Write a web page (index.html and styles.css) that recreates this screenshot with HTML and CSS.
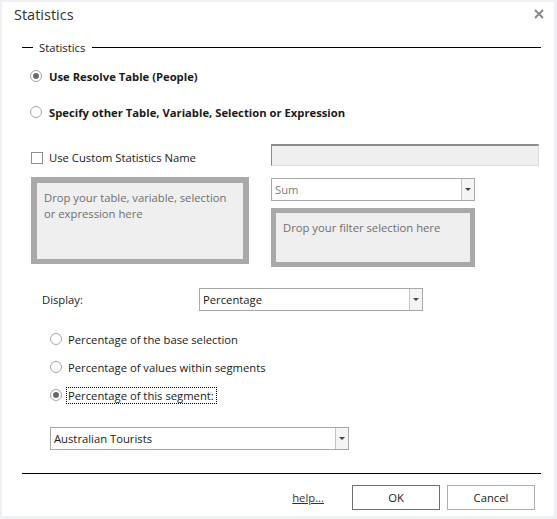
FILE: index.html
```html
<!DOCTYPE html>
<html lang="en">
<head>
    <meta charset="UTF-8">
    <title>Statistics</title>
    <link rel="stylesheet" href="styles.css">
</head>
<body>
    <div class="dialog">
        <div class="titlebar">
            <span class="title">Statistics</span>
            <svg class="close" width="10" height="10" viewBox="0 0 10 10">
                <path d="M1 1 L9 9 M9 1 L1 9" stroke="#8a8a8a" stroke-width="2"/>
            </svg>
        </div>

        <div class="group-head">
            <span class="rule short"></span>
            <span class="legend">Statistics</span>
            <span class="rule"></span>
        </div>

        <div class="choice first">
            <span class="radio checked"></span>
            <span>Use Resolve Table (People)</span>
        </div>
        <div class="choice second">
            <span class="radio"></span>
            <span>Specify other Table, Variable, Selection or Expression</span>
        </div>

        <div class="source-grid">
            <div class="check-row">
                <span class="checkbox"></span>
                <span>Use Custom Statistics Name</span>
            </div>
            <div class="textbox"></div>

            <div class="drop-box big">Drop your table, variable, selection or expression here</div>
            <div class="right-col">
                <div class="select disabled">
                    <span class="value">Sum</span>
                    <span class="arrow"></span>
                </div>
                <div class="drop-box filter">Drop your filter selection here</div>
            </div>
        </div>

        <div class="display-row">
            <span class="display-label">Display:</span>
            <div class="select display-select">
                <span class="value">Percentage</span>
                <span class="arrow"></span>
            </div>
        </div>

        <div class="options">
            <div class="option">
                <span class="radio"></span>
                <span>Percentage of the base selection</span>
            </div>
            <div class="option">
                <span class="radio"></span>
                <span>Percentage of values within segments</span>
            </div>
            <div class="option">
                <span class="radio checked"></span>
                <span class="focused">Percentage of this segment:</span>
            </div>
        </div>

        <div class="select segment-select">
            <span class="value">Australian Tourists</span>
            <span class="arrow"></span>
        </div>

        <div class="separator"></div>

        <div class="footer">
            <a class="help" href="#">help...</a>
            <button class="btn default">OK</button>
            <button class="btn">Cancel</button>
        </div>
    </div>
</body>
</html>
```

FILE: styles.css
```css
* {
    box-sizing: border-box;
}

body {
    margin: 0;
    background-color: #eef0f4;
    font-family: "Open Sans", "Noto Sans", sans-serif;
    font-size: 11.25px;
    color: #1a1a1a;
}

.dialog {
    margin: 2px 3px 0 2px;
    height: 514px;
    background: #fff;
    overflow: hidden;
}

.titlebar {
    height: 24px;
    display: flex;
    align-items: center;
    justify-content: space-between;
    padding: 0 10px 0 12px;
}

.title {
    font-size: 14.5px;
    color: #333;
}

/* group box header: line, caption, line */
.group-head {
    display: flex;
    align-items: center;
    height: 16px;
    margin: 13px 13px 0 20px;
}

.rule {
    flex: 1;
    border-top: 1px solid #000;
}

.rule.short {
    flex: none;
    width: 11px;
}

.legend {
    padding: 0 7px 0 6px;
}

.choice {
    display: flex;
    align-items: center;
    height: 20px;
    margin-left: 28px;
    font-weight: bold;
    gap: 7px;
}

.choice.first {
    margin-top: 11px;
}

.choice.second {
    margin-top: 16px;
}

.radio {
    width: 12px;
    height: 12px;
    border: 1px solid #a6a6a6;
    border-radius: 50%;
    display: inline-flex;
    align-items: center;
    justify-content: center;
    flex: none;
}

.radio.checked::after {
    content: "";
    width: 6px;
    height: 6px;
    border-radius: 50%;
    background: #6a6a6a;
}

.source-grid {
    display: grid;
    grid-template-columns: 218px 268px;
    grid-template-rows: 22px auto;
    column-gap: 22px;
    row-gap: 11px;
    margin: 22px 0 0 29px;
}

.check-row {
    display: flex;
    align-items: center;
    gap: 6px;
    padding-top: 5px;
}

.checkbox {
    width: 12px;
    height: 12px;
    border: 1px solid #8f8f8f;
}

.textbox {
    background: #efefef;
    border-top: 2px solid #8c8c8c;
    border-left: 1px solid #8c8c8c;
    border-right: 1px solid #dcdcdc;
    border-bottom: 1px solid #dcdcdc;
}

.drop-box {
    background: #efefef;
    border: 6px solid #a9a9a9;
    border-bottom-width: 5px;
    color: #6e6e6e;
    padding: 7px 7px;
    line-height: 16px;
}

.drop-box.big {
    height: 87px;
}

.right-col {
    padding-top: 1px;
}

.drop-box.filter {
    width: 204px;
    height: 59px;
    border-width: 5px;
    margin-top: 7px;
    padding: 7px 7px;
}

.select {
    display: flex;
    align-items: stretch;
    border: 1px solid #a9a9a9;
    background: #fff;
    height: 23px;
}

.select .value {
    flex: 1;
    display: flex;
    align-items: center;
    padding-left: 3px;
}

.select .arrow {
    width: 13px;
    border-left: 1px solid #c4c4c4;
    background: #f4f4f4;
    display: flex;
    align-items: center;
    justify-content: center;
}

.select .arrow::after {
    content: "";
    border-top: 3px solid #444;
    border-left: 3px solid transparent;
    border-right: 3px solid transparent;
}

.select.disabled {
    width: 204px;
}

.select.disabled .value {
    color: #808080;
}

.display-row {
    display: flex;
    align-items: center;
    margin: 21px 0 0 40px;
}

.display-label {
    width: 157px;
}

.display-select {
    width: 224px;
}

.options {
    margin: 19px 0 0 48px;
    display: flex;
    flex-direction: column;
    gap: 10px;
}

.option {
    display: flex;
    align-items: center;
    gap: 6px;
    height: 18px;
}

.focused {
    outline: 1px dotted #000;
    padding: 0 2px 0 1px;
    margin-left: -1px;
}

.segment-select {
    margin: 23px 0 0 48px;
    width: 299px;
}

.separator {
    margin: 23px 13px 0 20px;
    border-top: 1px solid #000;
}

.footer {
    display: flex;
    align-items: center;
    justify-content: flex-end;
    margin: 11px 19px 0 0;
    gap: 7px;
}

.help {
    color: #333;
    margin-right: 21px;
}

.btn {
    width: 88px;
    height: 25px;
    background: #fff;
    border: 1px solid #adadad;
    font-family: inherit;
    font-size: 11.25px;
    color: #1a1a1a;
}

.btn.default {
    border-color: #707070;
}
```
